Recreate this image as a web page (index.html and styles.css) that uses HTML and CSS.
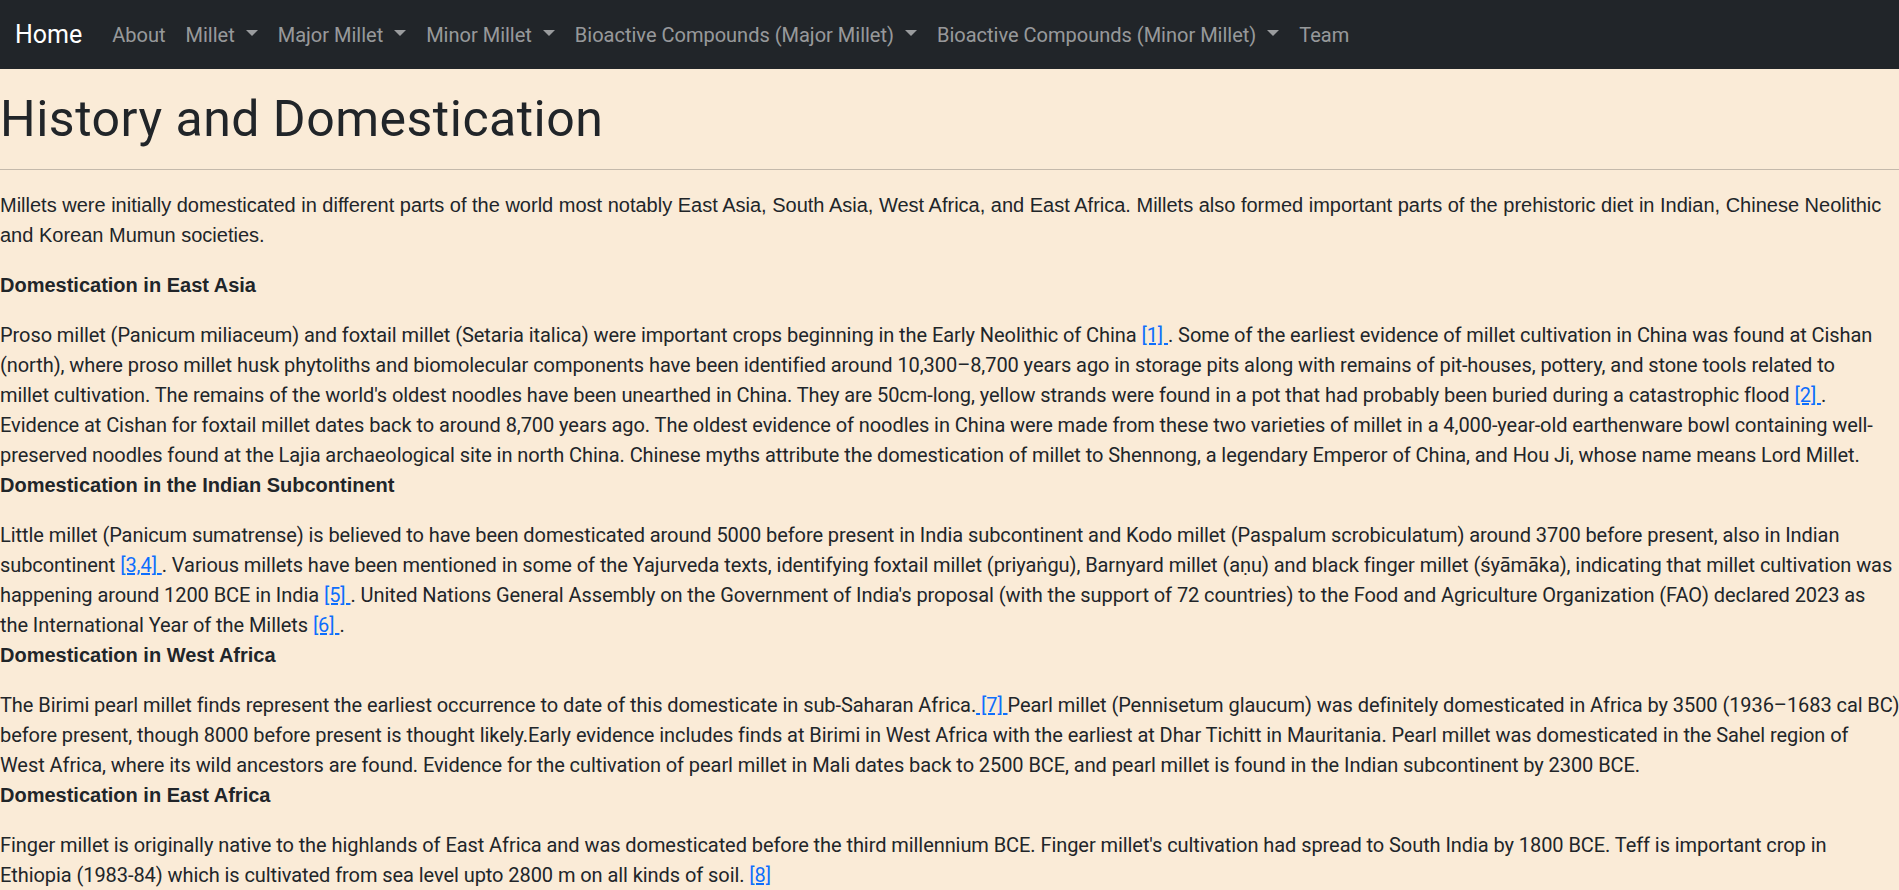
FILE: index.html
```html
<!DOCTYPE html>
<html lang="en">
<head>
<meta charset="utf-8">
<title>History and Domestication</title>
<link rel="stylesheet" href="styles.css">
</head>
<body>
<nav class="navbar">
  <a class="brand" href="#">Home</a>
  <ul class="nav">
    <li><a class="nav-link" href="#">About</a></li>
    <li><a class="nav-link dropdown" href="#">Millet </a></li>
    <li><a class="nav-link dropdown" href="#">Major Millet </a></li>
    <li><a class="nav-link dropdown" href="#">Minor Millet </a></li>
    <li><a class="nav-link dropdown" href="#">Bioactive Compounds (Major Millet) </a></li>
    <li><a class="nav-link dropdown" href="#">Bioactive Compounds (Minor Millet) </a></li>
    <li><a class="nav-link" href="#">Team</a></li>
  </ul>
</nav>
<main class="content">
  <h1 class="title">History and Domestication</h1>
  <hr class="rule">
  <p class="intro">Millets were initially domesticated in different parts of the world most notably East Asia, South Asia, West Africa, and East Africa. Millets also formed important parts of the prehistoric diet in Indian, Chinese Neolithic and Korean Mumun societies.</p>

  <h2 class="section-title">Domestication in East Asia</h2>
  <p class="text">Proso millet (Panicum miliaceum) and foxtail millet (Setaria italica) were important crops beginning in the Early Neolithic of China <a href="#">[1] </a>. Some of the earliest evidence of millet cultivation in China was found at Cishan<br>(north), where proso millet husk phytoliths and biomolecular components have been identified around 10,300–8,700 years ago in storage pits along with remains of pit-houses, pottery, and stone tools related to<br>millet cultivation. The remains of the world's oldest noodles have been unearthed in China. They are 50cm-long, yellow strands were found in a pot that had probably been buried during a catastrophic flood <a href="#">[2] </a>.<br>Evidence at Cishan for foxtail millet dates back to around 8,700 years ago. The oldest evidence of noodles in China were made from these two varieties of millet in a 4,000-year-old earthenware bowl containing well-<br>preserved noodles found at the Lajia archaeological site in north China. Chinese myths attribute the domestication of millet to Shennong, a legendary Emperor of China, and Hou Ji, whose name means Lord Millet.</p>

  <h2 class="section-title">Domestication in the Indian Subcontinent</h2>
  <p class="text">Little millet (Panicum sumatrense) is believed to have been domesticated around 5000 before present in India subcontinent and Kodo millet (Paspalum scrobiculatum) around 3700 before present, also in Indian<br>subcontinent <a href="#">[3,4] </a>. Various millets have been mentioned in some of the Yajurveda texts, identifying foxtail millet (priyaṅgu), Barnyard millet (aṇu) and black finger millet (śyāmāka), indicating that millet cultivation was<br>happening around 1200 BCE in India <a href="#">[5] </a>. United Nations General Assembly on the Government of India's proposal (with the support of 72 countries) to the Food and Agriculture Organization (FAO) declared 2023 as<br>the International Year of the Millets <a href="#">[6] </a>.</p>

  <h2 class="section-title">Domestication in West Africa</h2>
  <p class="text">The Birimi pearl millet finds represent the earliest occurrence to date of this domesticate in sub-Saharan Africa.<a href="#"> [7] </a>Pearl millet (Pennisetum glaucum) was definitely domesticated in Africa by 3500 (1936–1683 cal BC)<br>before present, though 8000 before present is thought likely.Early evidence includes finds at Birimi in West Africa with the earliest at Dhar Tichitt in Mauritania. Pearl millet was domesticated in the Sahel region of<br>West Africa, where its wild ancestors are found. Evidence for the cultivation of pearl millet in Mali dates back to 2500 BCE, and pearl millet is found in the Indian subcontinent by 2300 BCE.</p>

  <h2 class="section-title">Domestication in East Africa</h2>
  <p class="text">Finger millet is originally native to the highlands of East Africa and was domesticated before the third millennium BCE. Finger millet's cultivation had spread to South India by 1800 BCE. Teff is important crop in<br>Ethiopia (1983-84) which is cultivated from sea level upto 2800 m on all kinds of soil. <a href="#">[8]</a></p>
</main>
</body>
</html>
```

FILE: styles.css
```css
html, body {
  margin: 0;
  padding: 0;
}
body {
  background: #faebd7;
  color: #212529;
  font-family: "Roboto", sans-serif;
  font-size: 20px;
  line-height: 30px;
  letter-spacing: -0.07px;
  overflow-x: hidden;
}
a {
  color: #0d6efd;
}
.navbar {
  display: flex;
  align-items: center;
  height: 69px;
  padding: 0 15px;
  background: #212529;
  letter-spacing: 0;
}
.brand {
  color: #fff;
  text-decoration: none;
  font-size: 25px;
  line-height: 37.5px;
  margin-right: 20px;
}
.nav {
  display: flex;
  list-style: none;
  margin: 0;
  padding: 0;
}
.nav-link {
  display: block;
  padding: 10px;
  color: rgba(255, 255, 255, .55);
  text-decoration: none;
  white-space: pre;
}
.dropdown::after {
  content: "";
  display: inline-block;
  margin-left: 6px;
  vertical-align: 5.1px;
  border-top: 6px solid;
  border-left: 6px solid transparent;
  border-right: 6px solid transparent;
}
.content {
  padding-top: 20px;
}
.title {
  margin: 0 0 10px;
  font-size: 50px;
  line-height: 60px;
  font-weight: 400;
  letter-spacing: 0.5px;
}
.rule {
  margin: 20px 0;
  border: 0;
  border-top: 1px solid #c4b9ab;
}
.intro {
  font-family: "Liberation Sans", Arial, sans-serif;
  letter-spacing: 0;
  margin: 0 0 20px;
}
.section-title {
  font-family: "Liberation Sans", Arial, sans-serif;
  font-size: 20px;
  line-height: 30px;
  font-weight: 700;
  letter-spacing: 0;
  margin: 0 0 20px;
}
.text {
  margin: 0;
  white-space: nowrap;
}
```
